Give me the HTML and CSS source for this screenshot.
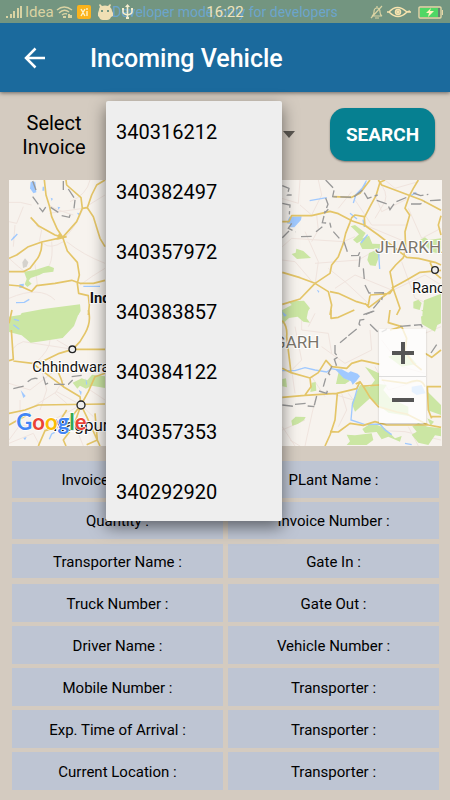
FILE: index.html
```html
<!DOCTYPE html>
<html lang="en">
<head>
  <meta charset="UTF-8">
  <title>Incoming Vehicle</title>
  <meta name="viewport" content="width=device-width, initial-scale=1.0">
  <link rel="stylesheet" href="styles.css">
</head>
<body>
  <div class="status-bar">
    <div class="status-left">
      <svg width="17" height="14" viewBox="0 0 17 14" fill="#d9d3a3"><path d="M0 11h2v2H0zM4 9h2v4H4zM7 6h2v7H7zM11 3h2v10h-2zM14 1h2v12h-2z"/></svg>
      <span>Idea</span>
      <svg width="17" height="14" viewBox="0 0 17 14" fill="none" stroke="#d9d3a3"><path d="M1 5q7-6 15 0M3 8q5-5 10-1M6 10q3-2 5-1" stroke-width="1.4"/><path d="M7 12h3M13 9v4M15 10v3" stroke-width="2"/></svg>
      <svg class="app-icon" width="14" height="14" viewBox="0 0 14 14"><rect width="14" height="14" rx="2" fill="#fbb31c"/><path d="M4 4l4 7M8 4l-4 7M10 6v5M10 3v2" stroke="#fff2c8" stroke-width="1.4"/></svg>
      <svg width="17" height="16" viewBox="0 0 17 16" fill="#efdfb4"><path d="M3 0l2 2q3-1 6 0l2-2 1 1-1 2q2 2 2 4l1 2v3l-2 1q-1 3-4 3H6q-3 0-4-3l-1-1V9l1-3q0-2 1-3L2 1z"/><path d="M4 6h2v2H4zM10 6h2v2h-2z" fill="#739580"/></svg>
      <svg class="usb-icon" width="13" height="16" viewBox="0 0 13 16" fill="none" stroke="#f4edcf" stroke-width="1.6"><path d="M6.500 2v12M2 6v2q0 2 4.500 3Q11 10 11 8V5"/><path d="M4 3l2.500-3L9 3zM1 4h2v2H1zM10 4h2v2h-2zM5 13h3v2H5z" fill="#f4edcf" stroke="none"/></svg>
    </div>
    <span class="dev-note">Developer mode, only for developers</span>
    <span class="clock">16:22</span>
    <div class="status-right">
      <svg width="14" height="14" viewBox="0 0 14 14" fill="none" stroke="#d9d3a3" stroke-width="1.2"><path d="M2 11q2-1 2-4 0-4 3-4t3 4q0 3 2 4zM7 1v2M5 13h4M1 13L12 1"/></svg>
      <svg width="26" height="14" viewBox="0 0 26 14" fill="none" stroke="#f7e3ae" stroke-width="1.5"><path d="M1 7h2q8-9 18 0h4M3 7q9 9 18 0l3-1"/><circle cx="12" cy="7" r="2.500"/><circle cx="12" cy="7" r="1" fill="#f7e3ae"/></svg>
      <svg class="battery" width="26" height="14" viewBox="0 0 26 14"><rect x="1" y="2" width="22" height="11" rx="1" fill="#66846f" stroke="#e6d9a8" stroke-width="1.4"/><path d="M2 3h18v9H2z" fill="#4fd765"/><path d="M24 5h1v5h-1z" fill="#e6d9a8"/><path d="M13 3L8 8h3l-1 4 6-6h-4z" fill="#fff3bf"/></svg>
    </div>
  </div>

  <header class="toolbar">
    <button class="back-btn" type="button" aria-label="Back">
      <svg width="22" height="22" viewBox="0 0 22 22" fill="none" stroke="#fff" stroke-width="2.500"><path d="M21 11H2M11.500 1.500L2 11l9.500 9.500"/></svg>
    </button>
    <h1>Incoming Vehicle</h1>
  </header>

  <main>
    <form class="search-form">
      <label for="invoice">Select Invoice</label>
      <div class="invoice-field">
        <select id="invoice">
          <option></option>
          <option>340316212</option>
          <option>340382497</option>
          <option>340357972</option>
          <option>340383857</option>
          <option>340384122</option>
          <option>340357353</option>
          <option>340292920</option>
        </select>
        <ul class="invoice-menu">
          <li><button type="button">340316212</button></li>
          <li><button type="button">340382497</button></li>
          <li><button type="button">340357972</button></li>
          <li><button type="button">340383857</button></li>
          <li><button type="button">340384122</button></li>
          <li><button type="button">340357353</button></li>
          <li><button type="button">340292920</button></li>
        </ul>
      </div>
      <button class="search-btn" type="button">SEARCH</button>
    </form>

    <section class="map">
      <svg class="map-canvas" viewBox="0 0 1299 798" preserveAspectRatio="xMidYMid slice" aria-label="Map">
        <rect width="1299" height="798" fill="#f7f3ee"/>

        <!-- north west -->
        <g transform="translate(-27 -15)">
          <g class="minor">
            <path d="M27 82Q60 78 95 90M27 140L50 145 70 95M40 215L45 150M108 150L125 165 118 200M155 200Q160 245 148 272M148 115L180 110 250 100 315 60M200 200Q250 240 315 265M130 205Q150 225 190 200M210 80Q260 60 270 15M250 100Q220 170 190 190M27 250Q60 280 75 290M105 268L112 330M27 370Q120 330 165 375M240 330Q280 300 315 280M220 120Q170 105 150 92"/>
          </g>
          <g class="park">
            <path d="M72 290L105 285 145 272 162 279 160 290 130 294 118 300 92 309 86 317 95 326 82 336 74 328 80 312z"/>
            <path d="M65 414L130 402 240 388 242 408 235 420 60 422z"/>
          </g>
          <path d="M75 250L85 262 80 275 69 279 67 262z" fill="#d5d2cd"/>
          <g class="lake">
            <path d="M92 20h14l3 32-9 3-10-15z"/>
            <path d="M128 35h5v12h-6zM152 68l7 3-4 7zM173 95l8 2-6 7zM231 113l8 2-4 6zM58 328l14-2-2 12-12 1z"/>
          </g>
          <path class="river" d="M34 196l9-11M38 192l14-15M48 383l25-1 15-9M250 334h50"/>
          <g class="road">
            <path d="M133 15L138 60 148 92 155 125 172 163 188 187M198 15L200 30 243 68 247 100 230 140 188 187M315 15L290 30 275 60 262 98 247 100M262 98L280 125 300 190 315 215M92 127L115 152 165 180 188 187 125 201 85 215 50 240 27 250M125 201Q128 235 105 260L90 280 70 290H27M188 187L202 228 232 262 238 300 232 325 236 355 265 362 268 390 265 420M27 330L60 333 95 349 110 332 165 325 215 316 240 325 280 325 315 316M188 187L178 178 173 192 200 185"/>
          </g>
          <path class="border" d="M98 18L108 45M98 65L115 88M118 98L128 110 138 95M190 18V45M205 42L222 68M225 75L222 100M152 97L175 112M185 122L208 127 212 112"/>
        </g>

        <!-- south west -->
        <g transform="translate(-27 390)">
          <g class="minor">
            <path d="M35 120Q50 100 70 95L220 118M27 220L90 240 180 170M120 160L140 240 120 300M60 270L60 345 27 390M100 290L170 245 243 285M140 340L243 285 280 320M60 345L180 365 315 350M210 310L250 408M120 408L100 370 27 400M270 240L315 270M190 210L165 250 200 280M218 118L170 90M150 90Q150 120 105 160"/>
          </g>
          <path class="park" d="M27 20L60 15 240 0 222 48 188 84 130 93 92 98 65 76 27 66z"/>
          <path class="park" d="M218 218L245 205 262 211 276 194 315 199V234L275 227 258 236 240 227 232 236z"/>
          <path class="lake" d="M62 240L77 258 70 264zM236 239l9 6-2 12zM257 205l5 16-4 4zM70 384l10-3-5 10zM222 340h12l5 9-16 2z"/>
          <path class="river" d="M40 44l18 14M42 28l15 4M148 388l7-16 9-5"/>
          <g class="road">
            <path d="M36 0L27 40M34 60L40 148 27 152M265 0Q275 35 255 70L240 95 218 118 178 130 130 153 98 160 40 153M218 118H315M98 160L150 200 190 230 240 260 243 285 265 245 285 200 315 190M150 150Q180 185 190 230M27 310L75 300 115 285 315 282M243 285L215 320 180 350 135 362 115 408M243 285L220 350 190 390 198 408M243 285L260 320 300 408M285 310L292 390 260 404M27 345L90 310 M200 300L175 340"/>
          </g>
          <path class="border" d="M40 236L72 228M83 215Q100 200 115 207M130 200L137 223 150 217M162 223H205L218 210M215 200L245 196"/>
        </g>

        <!-- north east -->
        <g transform="translate(798 -15)">
          <g class="minor">
            <path d="M20 70L70 85 75 15M75 90L110 120 140 60 130 15M125 120L130 165 110 200M22 215L50 190 205 200 240 185M300 60L320 110 400 70M240 75L290 150 395 150M400 100L440 190 498 160M310 20Q340 50 330 80L300 130M330 15L360 40 430 20M60 260L120 330 130 260 90 170M60 260L22 255M120 265L250 255 330 210M180 340L240 300 350 345M160 280L210 320 280 385M355 345L450 300 498 330M380 260L420 370 498 400M270 150L390 200M230 50L190 100"/>
          </g>
          <g class="park">
            <path d="M227 154L240 150 272 174 262 190 282 182 292 206 316 207 314 222 262 222 254 206 262 196 246 205 234 194 252 178z"/>
            <path d="M282 234L303 226 314 240 302 273 285 271 277 255zM50 237L62 233 64 221 85 228 108 249 66 252zM435 195L450 187 460 195 498 190V238L470 230z"/>
            <path d="M22 405L50 390 40 379 87 377 105 400 90 420H22zM442 420L447 376 498 356V420zM415 380L430 374 440 384 434 405 415 400z"/>
          </g>
          <g class="lake">
            <path d="M35 145L43 125 80 124 78 135 58 157 44 157 47 147zM260 38L272 17 276 16 267 42 242 61 235 64z"/>
            <path d="M22 404l13 5-2 6H22zM125 344l8 4-2 6z"/>
          </g>
          <path class="river" d="M104 77L155 68M242 62L235 84M225 115l21 17M264 134l4 22M310 220l4 62M278 179l-20 25M408 62l16-10"/>
          <g class="road">
            <path d="M22 140H42L50 122 110 122 165 109 190 116 232 138 268 150 310 180 355 215 395 247 430 250 480 262 498 270M330 15L315 22 303 62 285 95 268 128 270 155M268 125L240 120 230 128 225 142M310 15L320 30 400 60 440 75 498 106M430 15L415 40 402 65 390 100 404 120 390 170 392 220 385 248 362 270 345 290 355 340 345 355 285 360M225 142L212 175 205 205 190 245 170 270 165 295 120 325 75 372 22 388M22 292L75 308 120 325 160 350 170 390 165 420M165 350L190 355 245 380 280 390 285 362M270 385L282 397 355 342M355 342L375 400 365 420M350 340L395 315 435 292 498 286M465 262L480 295 498 310M498 122L490 150 498 180M175 65L230 67 255 55 285 15"/>
          </g>
          <path class="border" d="M152 15L178 42 173 65 235 67 263 45 278 70 308 60M305 76L338 88 345 104 360 82 402 64M415 54L437 62 460 58M408 87H435L450 80M465 77L498 75M22 32L42 40 37 60H50M22 85L45 90 43 118M50 145L40 160 62 171M22 188L42 168M78 185L112 184M123 170L142 155M152 69L159 88 148 115 160 103M147 123L142 143 165 145 168 158M175 170L193 190M207 200L217 230M228 242L250 241 255 230M255 244L252 277M265 280L268 313M270 330L282 354 325 353 320 375M315 376L295 400M265 419L298 407"/>
        </g>

        <!-- south east -->
        <g transform="translate(798 390)">
          <g class="minor">
            <path d="M80 0V60L160 70 170 130M60 50L80 150 50 180 60 250M110 200L150 260M140 110L210 160 290 120 285 60M120 10L100 50M90 330L22 360M120 270L90 408M75 408L45 390M200 250L215 300 190 350M280 360L390 365 498 390M320 90L380 170 450 190M300 170L340 240 440 210M150 245L235 270 220 250M450 70L498 50M400 350L430 408M22 350L60 408"/>
          </g>
          <g class="park">
            <path d="M22 0H100L95 25 105 38 85 35 68 20 42 24 22 42z"/>
            <path d="M438 0H498V40L487 45 480 65 440 42 438 20 450 10z"/>
            <path d="M270 170L312 190V222L335 225 325 240 345 265 400 290V318L340 308 285 265 240 305 230 280 255 225 285 230 300 210zM183 222L190 190 200 183 208 204 225 212 210 222zM22 207L33 205 36 232 22 229zM110 218l12-2 2 26-18 4zM49 332L62 320 92 321 87 330 68 342 52 347z"/>
            <path d="M215 374L240 376 290 370 295 390 275 405H215L225 394zM262 357L280 345 305 344 330 355 360 385 380 378 375 395 340 380 320 388 305 366 270 369zM412 349L430 340 458 350 498 355V379L480 376 460 405 430 398 410 374 425 365z"/>
            <path d="M458 245L498 285V315L462 302zM340 140l50-18 35 40-45 8zM457 325l20 10-10 12z"/>
          </g>
          <g class="lake">
            <path d="M180 178L200 178 220 188 227 184 248 191 255 199 244 213 233 224 228 214 206 205z"/>
            <path d="M22 5L36 16 27 20zM410 230L440 225 452 250 425 255 410 245z"/>
          </g>
          <path class="river" d="M22 182H60L90 173 120 180 155 186 170 176 190 180M250 225L240 260 232 285 228 330 270 344 315 342 330 360 350 374M390 400L410 404"/>
          <g class="road">
            <path d="M22 175L48 188 105 204 130 188 153 151 170 170 215 175 230 160 260 151 315 163M22 32Q38 50 35 80L48 188M105 204L108 230 90 255M22 262L90 256 185 250 245 236 255 215 268 234 285 262 310 290 365 306 395 312 460 345 498 352M187 250L180 330 165 375 150 408M165 365L190 366 225 340 265 346 300 335 335 345H460M168 0V25L190 22 238 0M345 0L340 38 380 50 395 85 390 125 415 160 440 180M312 225L265 228M455 230H498M457 230L460 300 470 325M470 320H498M498 120L470 142 450 130M255 215L242 222M345 60L380 50M395 220Q440 200 450 230M320 210L395 220"/>
          </g>
          <path class="border" d="M298 3L272 13M268 28L255 30 252 42 262 54M285 43L308 65M320 66L335 58M375 49L438 44 442 52M245 57L220 77M215 82L195 98M180 105V130L190 140 178 148 184 165 170 170 160 190 170 200M152 205L145 230M132 243L155 250 158 238M125 258L118 286M22 285L55 289M60 283L92 280M98 288L118 290M468 129L485 104"/>
        </g>

        <g class="town">
          <circle cx="190" cy="508" r="10"/>
          <circle cx="216" cy="675" r="12"/>
          <circle cx="1278" cy="270" r="10"/>
        </g>
        <text class="map-label bold" x="242" y="370">India</text>
        <text class="map-label" x="70" y="576">Chhindwara</text>
        <text class="map-label city" x="132" y="752">Nagpur</text>
        <text class="map-label" x="1209" y="339">Ranchi</text>
        <text class="map-label state" x="1098" y="220">JHARKHAND</text>
        <text class="map-label state" x="931" y="504" text-anchor="end">CHHATTISGARH</text>
        <text class="google" x="22" y="751"><tspan fill="#4285f4">G</tspan><tspan fill="#ea4335">o</tspan><tspan fill="#fbbc05">o</tspan><tspan fill="#4285f4">g</tspan><tspan fill="#34a853">l</tspan><tspan fill="#ea4335">e</tspan></text>
      </svg>
      <div class="zoom-controls">
        <button type="button" aria-label="Zoom in"><svg width="22" height="22" viewBox="0 0 22 22"><path d="M0 11h22M11 0v22"/></svg></button>
        <button type="button" aria-label="Zoom out"><svg width="22" height="22" viewBox="0 0 22 22"><path d="M0 11h22"/></svg></button>
      </div>
    </section>

    <ul class="details">
      <li class="low">Invoice Number :</li>
      <li class="low">PLant Name :</li>
      <li class="low">Quantity :</li>
      <li class="low">Invoice Number :</li>
      <li class="short">Transporter Name :</li>
      <li class="short">Gate In :</li>
      <li>Truck Number :</li>
      <li>Gate Out :</li>
      <li>Driver Name :</li>
      <li>Vehicle Number :</li>
      <li>Mobile Number :</li>
      <li>Transporter :</li>
      <li>Exp. Time of Arrival :</li>
      <li>Transporter :</li>
      <li>Current Location :</li>
      <li>Transporter :</li>
    </ul>
  </main>
</body>
</html>
```
FILE: styles.css
```css
* {
  box-sizing: border-box;
}

body {
  margin: 0;
  min-height: 100vh;
  background: #d4cbc0;
  color: #000;
  font-family: Roboto, "Liberation Sans", sans-serif;
}

button {
  font-family: inherit;
  border: none;
  cursor: pointer;
}

ul {
  list-style: none;
  margin: 0;
  padding: 0;
}

svg {
  display: block;
}

/* status bar */
.status-bar {
  position: relative;
  display: flex;
  justify-content: space-between;
  align-items: center;
  height: 23px;
  padding: 0 6px;
  background: #739580;
  color: #d9d3a3;
  font-size: 14px;
}

.status-left,
.status-right {
  display: flex;
  align-items: center;
  gap: 2px;
}

.status-left {
  font-size: 15px;
}

.app-icon {
  margin: 0 4px 0 2px;
}

.usb-icon {
  margin-left: 5px;
  position: relative;
  z-index: 1;
}

.battery {
  margin-left: 4px;
}

.dev-note,
.clock {
  position: absolute;
  left: 50%;
  transform: translateX(-50%);
  white-space: nowrap;
}

.dev-note {
  color: #6ba5cc;
}

.clock {
  color: #efe3bb;
  font-size: 15px;
}

/* toolbar */
.toolbar {
  display: flex;
  align-items: center;
  gap: 42px;
  height: 69px;
  padding: 0 22px;
  background: #1b6a9d;
  box-shadow: 0 1px 4px rgba(0, 0, 0, 0.5);
}

.back-btn {
  padding: 2px;
  background: none;
}

.toolbar h1 {
  margin: 0;
  padding-top: 2px;
  color: #fff;
  font-size: 25px;
  font-weight: 500;
}

/* invoice search */
.search-form {
  display: flex;
  align-items: center;
  padding: 16px 15px 19px 9px;
}

.search-form label {
  width: 90px;
  margin-right: 7px;
  font-size: 20px;
  line-height: 24px;
  text-align: center;
}

.invoice-field {
  position: relative;
  flex: 1;
  margin-right: 30px;
}

.invoice-field::after {
  content: "";
  position: absolute;
  right: 5px;
  top: 23px;
  border: 6px solid transparent;
  border-top: 7px solid #5b5751;
  border-bottom: none;
  pointer-events: none;
}

.invoice-field select {
  display: block;
  width: 100%;
  height: 53px;
  border: none;
  background: none;
  font-size: 20px;
  appearance: none;
}

.invoice-menu {
  position: absolute;
  z-index: 5;
  top: -7px;
  left: 0;
  width: 176px;
  background: #eee;
  border-radius: 2px;
  box-shadow: 0 6px 16px rgba(0, 0, 0, 0.5);
}

.invoice-menu button {
  display: block;
  width: 100%;
  height: 60px;
  padding: 2px 10px 0;
  background: none;
  color: #000;
  font-size: 20px;
  text-align: left;
}

.search-btn {
  width: 105px;
  height: 53px;
  padding: 0;
  border-radius: 15px;
  background: #068091;
  box-shadow: 0 1px 2px rgba(0, 0, 0, 0.4);
  color: #fff;
  font-size: 19px;
  font-weight: 700;
}

/* map */
.map {
  position: relative;
  margin: 0 8px 0 9px;
}

.map-canvas {
  width: 100%;
}

.minor {
  fill: none;
  stroke: #f0e4de;
  stroke-width: 3;
}

.road {
  fill: none;
  stroke: #e4c568;
  stroke-width: 5;
  stroke-linejoin: round;
}

.border {
  fill: none;
  stroke: #999;
  stroke-width: 4;
  stroke-dasharray: 32 10;
}

.park {
  fill: #cbe6a3;
}

.lake {
  fill: #a0c9ff;
}

.river {
  fill: none;
  stroke: #a0c9ff;
  stroke-width: 4;
}

.town {
  fill: #eee;
  stroke: #222;
  stroke-width: 4;
}

.map-label {
  fill: #111;
  stroke: #fff;
  stroke-width: 6;
  paint-order: stroke;
  font-size: 44px;
}

.map-label.bold {
  font-weight: 700;
}

.map-label.city {
  font-size: 51px;
}

.map-label.state {
  fill: #7b756a;
  font-size: 51px;
}

.google {
  font-family: Lato, sans-serif;
  font-size: 66px;
  font-weight: 700;
  stroke: #fff;
  stroke-width: 4;
  paint-order: stroke;
}

.zoom-controls {
  position: absolute;
  right: 16px;
  bottom: 23px;
  width: 47px;
  background: rgba(255, 255, 255, 0.75);
  box-shadow: 0 1px 2px rgba(0, 0, 0, 0.2);
}

.zoom-controls button {
  display: flex;
  align-items: center;
  justify-content: center;
  width: 100%;
  height: 47px;
  padding: 0;
  background: none;
}

.zoom-controls button + button {
  border-top: 1px solid #ddd;
}

.zoom-controls path {
  stroke: #555;
  stroke-width: 4;
}

/* vehicle details */
.details {
  display: grid;
  grid-template-columns: 1fr 1fr;
  gap: 4px 5px;
  padding: 15px 11px 10px 12px;
}

.details li {
  display: flex;
  align-items: center;
  justify-content: center;
  min-height: 38px;
  padding-top: 1px;
  background: #bec5d3;
  font-size: 15px;
}

.details .low {
  min-height: 37px;
}

.details .short {
  min-height: 34px;
  margin: 1px 0 2px;
}
```
